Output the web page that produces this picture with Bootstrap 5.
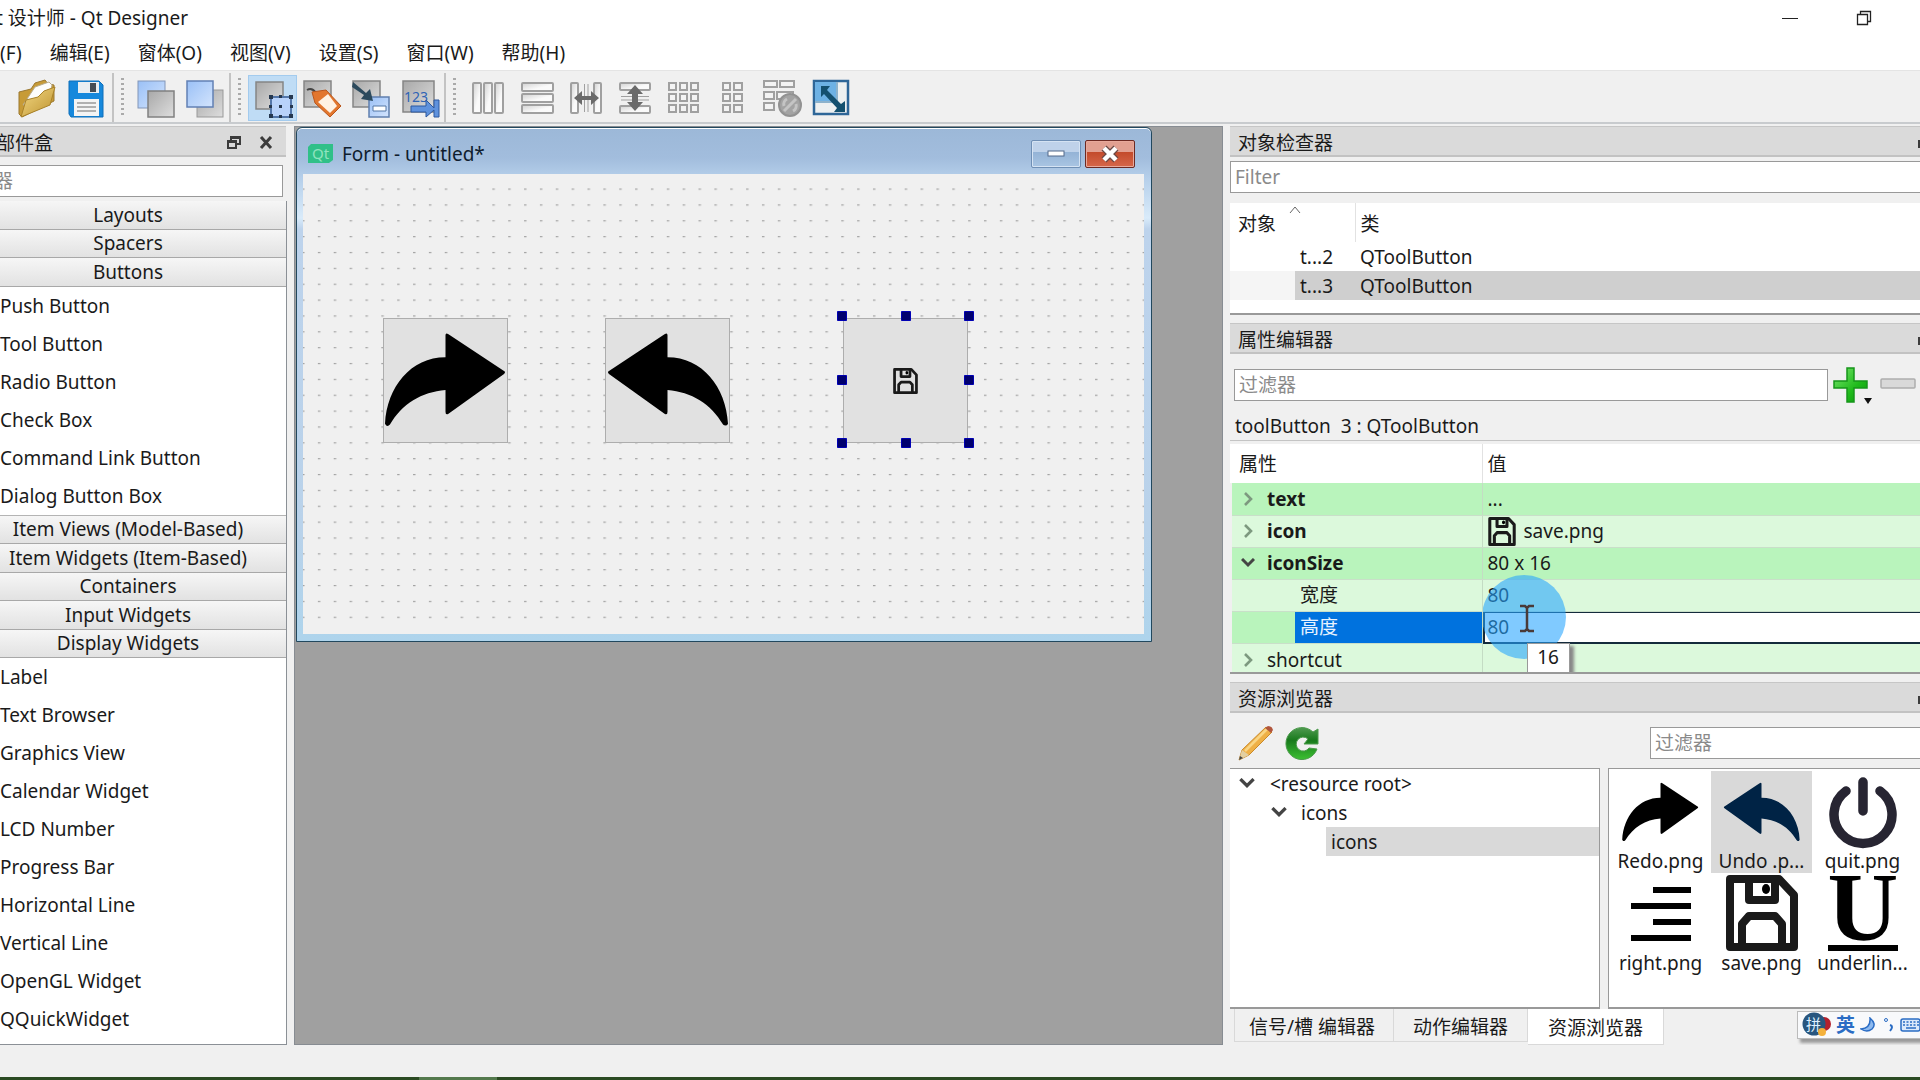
<!DOCTYPE html>
<html lang="zh-CN">
<head>
<meta charset="utf-8">
<meta name="viewport" content="width=device-width, initial-scale=1">
<title>Qt Designer</title>
<link href="https://cdn.jsdelivr.net/npm/bootstrap@5.3.0/dist/css/bootstrap.min.css" rel="stylesheet">
<style>
body{font-family:"Noto Sans","Noto Sans CJK SC",sans-serif;font-size:19px;line-height:28px;color:#1a1a1a;background:#f0f0f0;overflow:hidden}
button{font:inherit;color:inherit;background:none;border:0;padding:0}
svg{display:block;flex:none}
input,button{border-radius:0}
.clipped{margin-left:-4px}
.titlebar{height:36px}
.menubar{height:34px;gap:28px}
.menubar a{color:#1a1a1a;text-decoration:none}
.winctl{gap:56px;padding-right:47px}
.toolbar{height:54px;padding-top:2px;border-top:1px solid #e4e4e4;border-bottom:2px solid #c8cbce;background:#f0f0f0}
.tsec{border-right:2px solid #c3c3c3}
.tsec:first-child{padding-left:12px;padding-right:2px}
.tsec:last-child{border:0}
.grip{width:3px;height:40px;margin:0 7px;background:repeating-linear-gradient(#aaa 0 2px,transparent 2px 5px)}
.tool{width:49px;height:46px;display:flex;align-items:center;justify-content:center}
.tool.on{background:#bfdcf5;box-shadow:inset 0 0 0 1px #a3cbee}
.docks{gap:7px;padding-top:2px}
.leftdock{width:287px}
.rightdock{width:690px}
.dhead{height:31px;flex:none;padding:4px 8px 0;background:#dadada;border-top:1px solid #c6c6c6;border-bottom:2px solid #c2c2c2}
.dhead h2{font-size:inherit;font-weight:400;line-height:inherit}
.leftdock .dhead{margin-right:1px}
.fbox{height:32px;border:1px solid #999;outline:0;padding:0 4px;background:#fff;color:#1a1a1a;font-size:19px;min-width:0}
.fbox::placeholder{color:#8a8a8a;opacity:1}
.fbox.cutoff{text-indent:-6px}
.toolbox{border-right:1px solid #8b9096;border-bottom:1px solid #8b9096;background:#fff;padding-bottom:6px}
.cat{flex:1 1 0;min-height:0;display:flex;align-items:center;justify-content:center;padding-right:30px;background:linear-gradient(#f6f6f6,#e2e2e2);border-bottom:1px solid #a8a8a8}
.cat.after{border-top:1px solid #b4b4b4}
.wlist{list-style:none;margin:0;padding:0}
.wlist li{height:38px;line-height:38px}
.mdi{background:#a0a0a0;border:1px solid #878c92;min-width:0}
.formwin{position:absolute;left:1px;top:0;width:856px;height:515px;border:1px solid #22485e;border-radius:6px 6px 0 0;background:linear-gradient(#9cb8d8 0,#a2bddd 30px,#b5cfea 50px,#d9ebfa 90px,#bdd3ec 101px,#b9d2ea 400px,#aed4ec 100%);padding:0 7px 7px 6px;box-shadow:inset 0 1px 0 #fff}
.fcap{height:46px;padding:6px 9px 0 0;color:#0f1d2e}
.fcap h1{font-size:19px;line-height:28px;margin:0 0 0 9px;font-weight:400}
.fbtn{width:50px;height:28px;border:1px solid #6f8fb5;border-radius:2px;background:linear-gradient(#bfd2ea 0 42%,#94b3d6 43%,#a9c5e3);display:flex;align-items:center;justify-content:center;box-shadow:inset 0 0 0 1px #d5e3f3}
.fbtn.x{border-color:#6d2a23;background:linear-gradient(#e2a091 0 42%,#c34a2b 43%,#d6674a);box-shadow:inset 0 0 0 1px #e8a99b}
.canvas{background:#f0f0f0;position:relative}
.wbtn{position:absolute;width:125px;height:125px;top:144px;background:#e1e1e1;border:1px solid #adadad;display:flex;align-items:center;justify-content:center}
.wbtn.a{left:80px}.wbtn.b{left:302px}.wbtn.c{left:540px}
.handles{position:absolute;left:534px;top:137px}
.box{background:#fff;border-bottom:2px solid #999;overflow:hidden}
.box table{width:100%;table-layout:fixed;border-collapse:collapse;background:#fff}
.box th{font-weight:400}
.insp{height:112px;margin-top:10px}
.insp thead tr{height:39px}
.insp tbody tr{height:29px}
.insp th,.insp td,.prop th,.prop td{padding:0 0 0 5px}
.insp thead th:first-child,.prop thead th:first-child{padding-left:8px;border-right:1px solid #e2e2e2;position:relative}
.insp td:first-child{padding-left:70px}
.insp tr.sel td{background:#cfcfcf}
.insp tr.sel td:first-child{background:linear-gradient(90deg,#f5f5f5 65px,#cfcfcf 65px)}
.insp thead th{padding-top:3px}
.sort{position:absolute;left:58px;top:2px}
.pfilter{margin-top:12px}
.objname{height:37px;padding:8px 5px 0;border-bottom:1px solid #c4c4c4}
.prop{height:230px;margin-top:3px}
.prop thead tr{height:39px}
.prop tbody tr{height:32px;background:#dcf9dc}
.prop tbody tr.deep{background:#b9f4bc}
.prop tbody th,.prop tbody td{border-bottom:1px solid #c9dfc9}
.prop tbody th{border-right:1px solid #c4dcc4;border-left:2px solid #f0f0f0}
.prop tbody th.kid{padding-left:68px}
.prop tbody th.cur{background:linear-gradient(90deg,#b9f4bc 63px,#0072de 63px);color:#e8f3ff}
.prop tbody td.edit{padding:0;position:relative;border-bottom:0}
.edit input{width:100%;height:32px;border:solid #142b3c;border-width:1px 0 2px 2px;padding:0 0 0 3px;outline:0;font-size:19px;display:block;color:#1a1a1a;background:#fff}
.tip{position:absolute;left:44px;top:31px;width:43px;height:30px;background:#fff;border:1px solid #999;box-shadow:4px 3px 3px #888;text-align:center;line-height:26px;z-index:3}
.halo{position:absolute;left:0;top:-37px;z-index:2}
.exp{width:14px;margin:0 12px 0 4px}
.rbar{height:55px;padding:4px 0 0 8px}
.rbar button{margin-right:10px}
.rfilter{width:270px}
.split{gap:8px}
.tree{width:370px;background:#fff;border:1px solid #999;border-left:0;border-bottom-width:2px}
.trow{height:29px;gap:15px;padding-left:9px}
.trow.l2{padding-left:41px;gap:14px}
.trow.l3{margin-left:96px;padding-left:5px;background:#d9d9d9}
.icons{background:#fff;border:solid #999;border-width:1px 0 2px 1px;padding:2px 0 0 1px;min-width:0;overflow:hidden;align-content:flex-start}
.ico{width:101px;height:102px;display:flex;flex-direction:column;align-items:center;justify-content:flex-end;white-space:nowrap}
.ico.on{background:#d9d9d9}
.ico span{line-height:24px}
.tabs{height:36px;padding-left:4px}
.tabs button{height:33px;padding:3px 18px 0 14px;border:1px solid #d9d9d9;border-top:0}
.tabs button+button{border-left:0;padding:3px 19px 0}
.tabs button.on{height:36px;background:#fff;padding:2px 20px 0}
.ime{width:123px;height:28px;margin-top:2px;background:#f8f9fb;border:1px solid #bbb;border-right:0;box-shadow:3px 4px 3px #999;padding-left:4px;gap:5px;color:#2a6cc4;font-weight:700}
.status{height:32px}
.edge{height:3px;background:linear-gradient(90deg,#2b4a22 0 419px,#54794d 419px 497px,#2b4a22 497px)}
</style>
</head>
<body class="d-flex flex-column vh-100">
<svg width="0" height="0" class="position-absolute" aria-hidden="true">
<defs>
<linearGradient id="gy" x1="0" y1="0" x2="1" y2="1"><stop offset="0" stop-color="#a8a8a8"/><stop offset="1" stop-color="#dedede"/></linearGradient>
<linearGradient id="bl" x1="0" y1="0" x2="1" y2="1"><stop offset="0" stop-color="#9ac0f6"/><stop offset="1" stop-color="#d3e4fd"/></linearGradient>
<linearGradient id="fo" x1="0" y1="0" x2="1" y2="1"><stop offset="0" stop-color="#f4da85"/><stop offset="1" stop-color="#bd922f"/></linearGradient>
<linearGradient id="gr" x1="0" y1="0" x2="0" y2="1"><stop offset="0" stop-color="#4f9a50"/><stop offset=".4" stop-color="#187a1c"/><stop offset="1" stop-color="#3cc032"/></linearGradient>
<linearGradient id="pl" x1="0" y1="0" x2="1" y2="1"><stop offset="0" stop-color="#7be56f"/><stop offset=".6" stop-color="#1fbb1b"/><stop offset="1" stop-color="#089408"/></linearGradient>
<linearGradient id="cell" x1="0" y1="0" x2="1" y2="1"><stop offset="0" stop-color="#d2d2d2"/><stop offset=".6" stop-color="#fafafa"/></linearGradient>
<symbol id="redo" viewBox="0 0 122 94"><path d="M61 3q0-3 3-1l56 37q2 1 0 3L64 82q-3 2-3-2V58C37 60 17 72 5 93q-3 3-5-1C2 55 26 25 61 25z"/></symbol>
<symbol id="save" viewBox="0 0 72 76"><g fill="none" stroke="currentColor" stroke-width="8" stroke-linejoin="round"><path d="M4 4h49l15 16v52H4z"/><path d="M23 5v20h26V5"/><path d="M16 71V49l7-8h26l7 8v22"/></g><ellipse cx="40" cy="14" rx="4" ry="5"/></symbol>
<symbol id="down" viewBox="0 0 14 10"><path d="M1 1l6 6 6-6" fill="none" stroke="#444" stroke-width="3"/></symbol>
<symbol id="right" viewBox="0 0 14 14"><path d="M4 1l6 6-6 6" fill="none" stroke="#7d997f" stroke-width="2.600"/></symbol>
</defs></svg>

<header class="bg-white">
 <div class="titlebar d-flex justify-content-between align-items-center">
  <div class="text-nowrap clipped">t 设计师 - Qt Designer</div>
  <div class="winctl d-flex align-items-center">
   <button aria-label="最小化"><svg width="18" height="16"><path d="M1 8.500h16" stroke="#222"/></svg></button>
   <button aria-label="还原"><svg width="18" height="16"><path d="M2.500 4.500h10v10h-10zM5.500 4.500v-3h10v10h-3" fill="none" stroke="#222" stroke-width="1.300"/></svg></button>
  </div>
 </div>
 <nav class="menubar d-flex align-items-center text-nowrap">
  <a href="#">(F)</a><a href="#">编辑(E)</a><a href="#">窗体(O)</a><a href="#">视图(V)</a><a href="#">设置(S)</a><a href="#">窗口(W)</a><a href="#">帮助(H)</a>
 </nav>
</header>

<div class="toolbar d-flex align-items-stretch">
 <div class="tsec d-flex align-items-center">
  <button class="tool" aria-label="打开"><svg width="40" height="40"><path d="M2 14l12-3 4-6 10-3 3 4 6 1v16L5 39l-3-3z" fill="#c79b37" stroke="#9b7830"/><path d="M6 27L18 9l14-5 3 3-2 9-21 11z" fill="#fdfdfb" stroke="#b9ad8e"/><path d="M4 39l5-17 12-3 6-6 11-4-5 18z" fill="url(#fo)" stroke="#a98229"/></svg></button>
  <button class="tool" aria-label="保存"><svg width="40" height="40"><path d="M3 3h30l4 4v32H5l-2-3z" fill="#1688dc" stroke="#0f6fb9"/><path d="M12 4h21v11H12z" fill="#e9eef2"/><path d="M24 5h6v9h-6z" fill="#454d55"/><path d="M8 21h25v17H8z" fill="#f4f4f4"/><path d="M11 25h19M11 29h19M11 33h19" stroke="#999" stroke-width="1.500"/></svg></button>
 </div>
 <div class="tsec d-flex align-items-center"><span class="grip"></span>
  <button class="tool" aria-label="置后"><svg width="40" height="40"><rect x="2" y="3" width="27" height="27" fill="url(#bl)" stroke="#8296b8"/><rect x="12" y="13" width="26" height="26" fill="url(#gy)" stroke="#808080" stroke-width="1.500"/></svg></button>
  <button class="tool" aria-label="置前"><svg width="40" height="40"><rect x="12" y="12" width="26" height="27" fill="url(#gy)" stroke="#999"/><rect x="2" y="3" width="26" height="26" fill="url(#bl)" stroke="#6280b4" stroke-width="1.500"/></svg></button>
 </div>
 <div class="tsec d-flex align-items-center"><span class="grip"></span>
  <button class="tool on" aria-label="编辑控件"><svg width="40" height="40"><rect x="3" y="4" width="27" height="27" fill="url(#gy)" stroke="#858585" stroke-width="1.500"/><rect x="18" y="19" width="20" height="20" fill="#b8d2fa" stroke="#5477aa" stroke-width="2"/><g fill="#26384f"><path d="M16 17h4v4h-4zM26 17h3v3h-3zM36 17h4v4h-4zM16 27h3v3h-3zM37 27h3v3h-3zM16 36h4v4h-4zM26 37h3v3h-3zM36 36h4v4h-4zM26 27h3v3h-3z"/></g></svg></button>
  <button class="tool" aria-label="编辑信号/槽"><svg width="40" height="40"><rect x="2" y="3" width="27" height="26" fill="url(#gy)" stroke="#858585" stroke-width="1.500"/><path d="M5 12q5-3 9 3" fill="none" stroke="#444" stroke-width="2"/><path d="M10 14l14-2 15 16-11 11-15-14z" fill="#e2762e" stroke="#b9561c"/><path d="M16 24l10-8 9 12-7 7z" fill="#fff2e4"/></svg></button>
  <button class="tool" aria-label="编辑伙伴"><svg width="40" height="40"><rect x="2" y="3" width="27" height="26" fill="url(#gy)" stroke="#858585" stroke-width="1.500"/><rect x="18" y="19" width="20" height="20" fill="url(#bl)" stroke="#5f7fae" stroke-width="1.500"/><path d="M22 28h13v5H22z" fill="#fff" stroke="#5377a6"/><path d="M2 4l13 11 4-4 3 12-12-2 3-4L1 9z" fill="#2c4a5d"/></svg></button>
  <button class="tool" aria-label="编辑Tab顺序"><svg width="40" height="40"><rect x="3" y="3" width="31" height="31" fill="url(#gy)" stroke="#858585" stroke-width="1.500"/><text x="4" y="24" font-size="14" fill="#2f63b5">123</text><path d="M11 28h15v-6l8 8v-8h5v17h-5v-7l-8 7v-5H11z" fill="#5f92dd" stroke="#2c58a0"/></svg></button>
 </div>
 <div class="tsec d-flex align-items-center"><span class="grip"></span>
  <button class="tool" aria-label="水平布局"><svg width="40" height="40" fill="url(#cell)" stroke="#a0a0a0" stroke-width="2"><rect x="5" y="5" width="8" height="30" rx="1"/><rect x="16" y="5" width="8" height="30" rx="1"/><rect x="27" y="5" width="8" height="30" rx="1"/></svg></button>
  <button class="tool" aria-label="垂直布局"><svg width="40" height="40" fill="url(#cell)" stroke="#a0a0a0" stroke-width="2"><rect x="5" y="5" width="31" height="8" rx="1"/><rect x="5" y="16" width="31" height="8" rx="1"/><rect x="5" y="27" width="31" height="8" rx="1"/></svg></button>
  <button class="tool" aria-label="水平分裂器"><svg width="40" height="40" fill="url(#cell)" stroke="#a0a0a0" stroke-width="2"><rect x="5" y="5" width="7" height="30" rx="1"/><rect x="28" y="5" width="7" height="30" rx="1"/><path d="M18.500 6v28M22 6v28" stroke-width="1"/><path d="M8 20l8-7v5h9v-5l8 7-8 7v-5h-9v5z" fill="#6a6a6a" stroke="none"/></svg></button>
  <button class="tool" aria-label="垂直分裂器"><svg width="40" height="40" fill="url(#cell)" stroke="#a0a0a0" stroke-width="2"><rect x="5" y="5" width="30" height="7" rx="1"/><rect x="5" y="28" width="30" height="7" rx="1"/><path d="M6 18.500h28M6 22h28" stroke-width="1"/><path d="M20 7l8 9h-5v8h5l-8 9-8-9h5v-8h-5z" fill="#6a6a6a" stroke="none"/></svg></button>
  <button class="tool" aria-label="栅格布局"><svg width="40" height="40" fill="#f3f3f3" stroke="#a0a0a0" stroke-width="2"><path d="M5 5h7v7H5zM16 5h7v7h-7zM27 5h7v7h-7zM5 16h7v7H5zM16 16h7v7h-7zM27 16h7v7h-7zM5 27h7v7H5zM16 27h7v7h-7zM27 27h7v7h-7z"/></svg></button>
  <button class="tool" aria-label="表单布局"><svg width="40" height="40" fill="#f3f3f3" stroke="#a0a0a0" stroke-width="2"><path d="M10 5h7v7h-7zM21 5h8v7h-8zM10 16h7v7h-7zM21 16h8v7h-8zM10 27h7v7h-7zM21 27h8v7h-8z"/></svg></button>
  <button class="tool" aria-label="打破布局"><svg width="40" height="40" fill="#f3f3f3" stroke="#a0a0a0" stroke-width="2"><path d="M2 3h13v6H2zM18 3h14v6H18zM2 14h10v7H2zM15 14h16v7H15zM2 25h10v7H2z"/><circle cx="28" cy="27" r="11" fill="#a3a3a3" stroke="#929292"/><path d="M22 33l12-12M25 21a6 6 0 0 0-3 7M31 33a6 6 0 0 0 3-7" stroke="#c4c4c4" stroke-width="3" fill="none"/></svg></button>
  <button class="tool" aria-label="调整大小"><svg width="40" height="40"><rect x="3" y="3" width="34" height="33" fill="#edf0f1" stroke="#2e6698" stroke-width="2.500"/><path d="M4 4h22v20H4z" fill="#6db1e4"/><path d="M26 4v20H4" fill="none" stroke="#8cb2cc" stroke-width="2"/><path d="M10 8h9l-3 4 14 14 4-3v11H23l3-4-13-14-3 3z" fill="#14506f"/></svg></button>
 </div>
</div>

<main class="docks d-flex flex-grow-1 overflow-hidden">
 <aside class="leftdock d-flex flex-column flex-shrink-0 overflow-hidden">
  <div class="dhead d-flex align-items-center ps-0">
   <h2 class="flex-grow-1 mb-0 clipped">部件盒</h2>
   <button class="me-3" aria-label="浮动"><svg width="16" height="16" fill="none" stroke="#3c3c3c" stroke-width="2"><path d="M5 5V2h9v7h-3M2 6h8v7H2z"/><path d="M5 3h9M2 7h8"/></svg></button>
   <button class="me-1" aria-label="关闭"><svg width="16" height="16"><path d="M3 2l10 11M13 2L3 13" stroke="#3c3c3c" stroke-width="3"/></svg></button>
  </div>
  <input class="fbox cutoff flex-shrink-0 ps-0 border-start-0 mt-2 me-1" aria-label="过滤器" placeholder="器">
  <div class="toolbox flex-grow-1 d-flex flex-column mt-1">
   <button class="cat">Layouts</button><button class="cat">Spacers</button><button class="cat">Buttons</button>
   <ul class="wlist"><li>Push Button</li><li>Tool Button</li><li>Radio Button</li><li>Check Box</li><li>Command Link Button</li><li>Dialog Button Box</li></ul>
   <button class="cat after">Item Views (Model-Based)</button><button class="cat">Item Widgets (Item-Based)</button><button class="cat">Containers</button><button class="cat">Input Widgets</button><button class="cat">Display Widgets</button>
   <ul class="wlist"><li>Label</li><li>Text Browser</li><li>Graphics View</li><li>Calendar Widget</li><li>LCD Number</li><li>Progress Bar</li><li>Horizontal Line</li><li>Vertical Line</li><li>OpenGL Widget</li><li>QQuickWidget</li></ul>
  </div>
 </aside>

 <section class="mdi flex-grow-1 position-relative overflow-hidden">
  <div class="formwin d-flex flex-column">
   <div class="fcap d-flex align-items-center">
    <svg width="26" height="20" class="ms-1"><path d="M4 0h22v16l-4 3H1V3z" fill="#30c088"/><text x="5" y="15" font-size="15" fill="#8fe3bf">Qt</text></svg>
    <h1 class="flex-grow-1">Form - untitled*</h1>
    <button class="fbtn me-1" aria-label="最小化"><svg width="18" height="8"><rect x="1" y="1" width="16" height="5" fill="#fff" stroke="#52698a"/></svg></button>
    <button class="fbtn x" aria-label="关闭"><svg width="20" height="18"><path d="M4 3l12 12M16 3L4 15" stroke="#6b4a46" stroke-width="7"/><path d="M4 3l12 12M16 3L4 15" stroke="#fff" stroke-width="4.500"/></svg></button>
   </div>
   <div class="canvas flex-grow-1">
    <svg class="position-absolute w-100 h-100" aria-hidden="true"><defs><pattern id="dots" width="15.860" height="15.860" patternUnits="userSpaceOnUse" patternTransform="translate(-1 14.500)"><rect width="2.500" height="1.200" fill="#a2a2a2"/></pattern></defs><rect width="100%" height="446" fill="url(#dots)"/><rect width="100%" height="8" fill="#f0f0f0"/></svg>
    <button class="wbtn a" aria-label="Redo"><svg width="121" height="94" class="mb-1"><use href="#redo"/></svg></button>
    <button class="wbtn b" aria-label="Undo"><svg width="121" height="94" class="mb-1" viewBox="0 0 122 94"><g transform="matrix(-1 0 0 1 122 0)"><use href="#redo" width="122" height="94"/></g></svg></button>
    <button class="wbtn c" aria-label="Save"><svg width="25" height="26"><use href="#save"/></svg></button>
    <svg class="handles" width="138" height="138" fill="#00006e" stroke="#0000b4" aria-hidden="true"><path d="M.5.5h9v9h-9zM64.500.5h9v9h-9zM127.500.5h9v9h-9zM.5 64.500h9v9h-9zM127.500 64.500h9v9h-9zM.5 127.500h9v9h-9zM64.500 127.500h9v9h-9zM127.500 127.500h9v9h-9z"/></svg>
   </div>
  </div>
 </section>

 <aside class="rightdock d-flex flex-column flex-shrink-0 overflow-hidden">
  <div class="dhead d-flex align-items-center justify-content-between pe-0"><h2 class="mb-0">对象检查器</h2><svg width="3" height="12"><path d="M1 3h2v8H1z" fill="#3c3c3c"/></svg></div>
  <input class="fbox flex-shrink-0 mt-1 border-end-0" aria-label="Filter" placeholder="Filter">
  <div class="box insp flex-shrink-0">
   <table><colgroup><col style="width:125px"><col></colgroup>
    <thead><tr><th>对象<svg class="sort" width="14" height="9"><path d="M2 8l5-6 5 6" fill="none" stroke="#666"/></svg></th><th>类</th></tr></thead>
    <tbody><tr><td>t...2</td><td>QToolButton</td></tr><tr class="sel"><td>t...3</td><td>QToolButton</td></tr></tbody>
   </table>
  </div>
  <div class="dhead d-flex align-items-center justify-content-between mt-2 pe-0"><h2 class="mb-0">属性编辑器</h2><svg width="3" height="12"><path d="M1 3h2v8H1z" fill="#3c3c3c"/></svg></div>
  <div class="pfilter d-flex align-items-center ps-1 gap-1">
   <input class="fbox flex-grow-1" aria-label="过滤器" placeholder="过滤器">
   <button aria-label="添加"><svg width="44" height="38"><path d="M15 2h7v13h13v7H22v14h-7V22H2v-7h13z" fill="url(#pl)" stroke="#16951a" stroke-width="1.500"/><path d="M32 32h8l-4 6z" fill="#111"/></svg></button>
   <button aria-label="移除" class="me-1"><svg width="36" height="38"><rect x="1" y="13" width="34" height="9" rx="1" fill="#d9d9d9" stroke="#adadad" stroke-width="1.500"/></svg></button>
  </div>
  <div class="objname d-flex align-items-center flex-shrink-0">toolButton&nbsp; 3 : QToolButton</div>
  <div class="box prop flex-shrink-0 position-relative">
   <table><colgroup><col style="width:251px"><col></colgroup>
    <thead><tr><th>属性</th><th>值</th></tr></thead>
    <tbody>
     <tr class="deep"><th><span class="d-flex align-items-center"><svg class="exp" width="14" height="14"><use href="#right"/></svg><b>text</b></span></th><td>...</td></tr>
     <tr><th><span class="d-flex align-items-center"><svg class="exp" width="14" height="14"><use href="#right"/></svg><b>icon</b></span></th><td><span class="d-flex align-items-center gap-2"><svg width="28" height="29"><use href="#save"/></svg>save.png</span></td></tr>
     <tr class="deep"><th><span class="d-flex align-items-center"><svg class="exp" width="14" height="10"><use href="#down"/></svg><b>iconSize</b></span></th><td>80 x 16</td></tr>
     <tr><th class="kid">宽度</th><td>80</td></tr>
     <tr class="deep"><th class="kid cur"><label for="hval">高度</label></th><td class="edit"><input id="hval" value="80"><div class="tip">16</div>
      <svg class="halo" width="86" height="86" aria-hidden="true"><circle cx="41" cy="42" r="42" fill="#25a3ff" fill-opacity=".58"/><path d="M37 31h5l2 2 2-2h5M37 56h5l2-2 2 2h5M44 33v21" fill="none" stroke="#4a3a38" stroke-width="2.500"/></svg></td></tr>
     <tr><th><span class="d-flex align-items-center"><svg class="exp" width="14" height="14"><use href="#right"/></svg>shortcut</span></th><td></td></tr>
    </tbody>
   </table>
  </div>
  <div class="dhead d-flex align-items-center justify-content-between mt-2 pe-0"><h2 class="mb-0">资源浏览器</h2><svg width="3" height="12"><path d="M1 3h2v8H1z" fill="#3c3c3c"/></svg></div>
  <div class="rbar d-flex align-items-center flex-shrink-0">
   <button aria-label="编辑资源"><svg width="36" height="36"><path d="M1 35l3-10L28 2l6 5L11 30z" fill="#efb046" stroke="#c98a2b"/><path d="M7 26L29 4" stroke="#f9d585" stroke-width="2.500"/><path d="M1 35l3-10 7 5z" fill="#e3cfa0"/><path d="M1 35l1-4 3 2z" fill="#444"/><path d="M27 3l3-2q4 0 5 4l-2 3z" fill="#b1563d"/></svg></button>
   <button aria-label="重新加载"><svg width="36" height="36"><path d="M34 4v15H20l4-5a7 7 0 1 0 1 9l8 1A16 16 0 1 1 29 7z" fill="url(#gr)" stroke="#4b9a4b"/></svg></button>
   <input class="fbox rfilter ms-auto border-end-0" aria-label="过滤器" placeholder="过滤器">
  </div>
  <div class="split d-flex flex-grow-1 overflow-hidden">
   <div class="tree flex-shrink-0">
    <div class="trow d-flex align-items-center"><svg width="16" height="11"><use href="#down"/></svg>&lt;resource root&gt;</div>
    <div class="trow l2 d-flex align-items-center"><svg width="16" height="11"><use href="#down"/></svg>icons</div>
    <div class="trow l3 d-flex align-items-center">icons</div>
   </div>
   <div class="icons flex-grow-1 d-flex flex-wrap">
    <div class="ico"><svg width="77" height="59" class="mb-2"><use href="#redo"/></svg><span>Redo.png</span></div>
    <div class="ico on"><svg width="77" height="59" viewBox="0 0 122 94" fill="#002345" class="mb-2"><g transform="matrix(-1 0 0 1 122 0)"><use href="#redo" width="122" height="94"/></g></svg><span>Undo .p...</span></div>
    <div class="ico"><svg width="68" height="72" fill="none" stroke="#272532" stroke-linecap="round" stroke-width="9.500"><path d="M34 5v29M17 14a29 29 0 1 0 34 0"/></svg><span>quit.png</span></div>
    <div class="ico"><svg width="60" height="56" class="mb-2" stroke="#000" stroke-width="6"><path d="M22 3h38M0 19h60M22 35h38M0 51h60"/></svg><span>right.png</span></div>
    <div class="ico"><svg width="72" height="76"><use href="#save"/></svg><span>save.png</span></div>
    <div class="ico"><svg width="72" height="76"><text x="36" y="65" font-family="Liberation Serif,serif" font-weight="700" font-size="98" text-anchor="middle">U</text><path d="M1 70h70v6H1z"/></svg><span>underlin...</span></div>
   </div>
  </div>
  <div class="tabs d-flex align-items-start flex-shrink-0 text-nowrap">
   <button>信号/槽 编辑器</button><button>动作编辑器</button><button class="on">资源浏览器</button>
   <div class="ime d-flex align-items-center ms-auto">
    <svg width="29" height="26"><circle cx="22" cy="12" r="7" fill="#b3202d"/><circle cx="12" cy="12" r="11.500" fill="#28567f"/><text x="4" y="18" font-size="15" font-weight="400" fill="#dff0ff">拼</text><circle cx="20" cy="20" r="4" fill="#f4b13b"/></svg>
    <span>英</span>
    <svg width="16" height="16"><path d="M10 1q7 6 2 11-5 4-11 0 10-1 9-11z" fill="#8db9ef" stroke="#2a6cc4" stroke-width="1.500"/></svg>
    <svg width="14" height="16"><circle cx="5" cy="3" r="1.500" fill="none" stroke="#2a6cc4"/><path d="M9 8q4 1 0 6" fill="none" stroke="#2a6cc4" stroke-width="2"/></svg>
    <svg width="20" height="14"><rect x="1" y="1" width="19" height="12" rx="2" fill="#dbe9fb" stroke="#2a6cc4" stroke-width="1.500"/><path d="M3 4h16M3 7h16" stroke="#2a6cc4" stroke-width="1.500" stroke-dasharray="2 1.500"/><path d="M6 10h10" stroke="#2a6cc4" stroke-width="1.500"/></svg>
   </div>
  </div>
 </aside>
</main>
<footer class="status flex-shrink-0"></footer>
<div class="edge flex-shrink-0"></div>
<script src="https://cdn.jsdelivr.net/npm/bootstrap@5.3.0/dist/js/bootstrap.bundle.min.js"></script>
</body>
</html>
